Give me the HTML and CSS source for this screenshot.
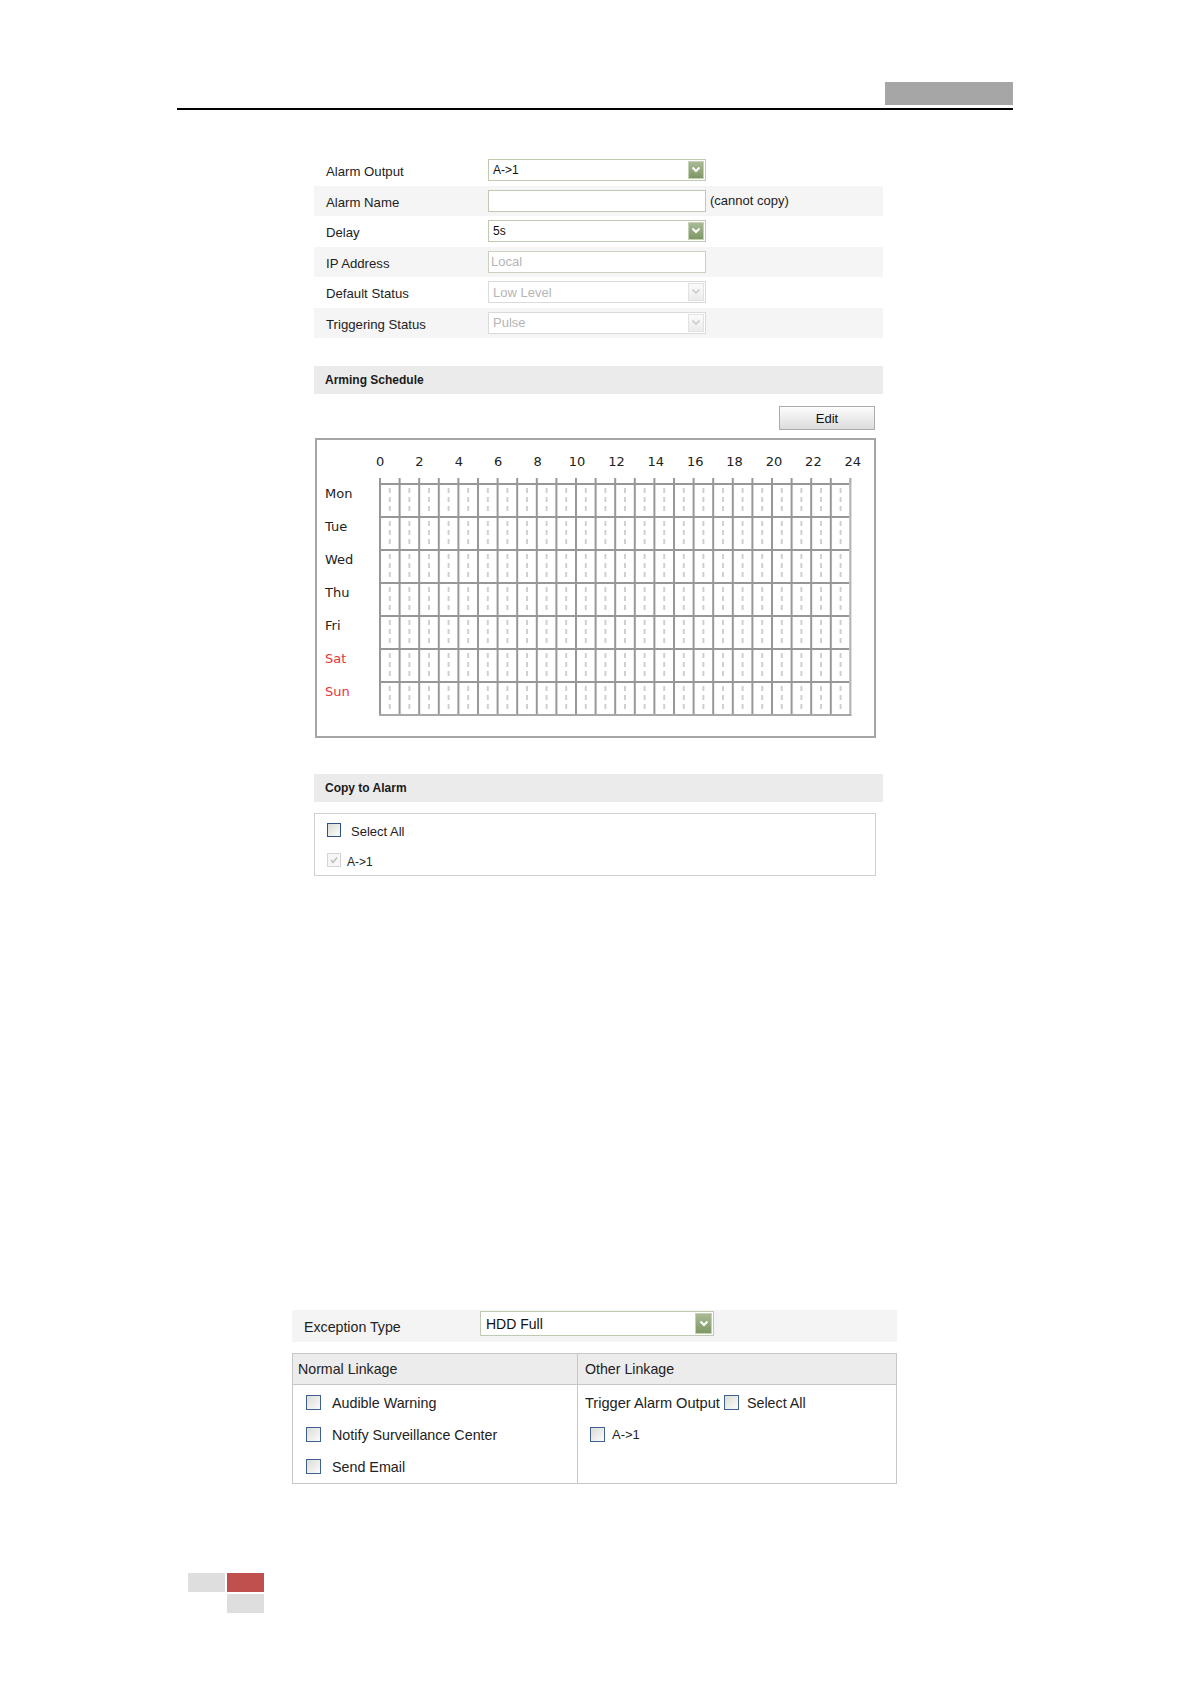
FILE: index.html
```html
<!DOCTYPE html>
<html>
<head>
<meta charset="utf-8">
<title>Alarm Output</title>
<link rel="stylesheet" href="styles.css">
</head>
<body>
<div class="page">
  <div class="top"><div class="tab"></div></div>

  <section class="cfg">
    <div class="row">
      <div class="lbl">Alarm Output</div>
      <div class="inp">A-&gt;1<span class="dd"><svg width="10" height="8" viewBox="0 0 10 8"><path d="M1.5 1.5 L5 5 L8.5 1.5" fill="none" stroke="#fff" stroke-width="2"/></svg></span></div>
    </div>
    <div class="row">
      <div class="lbl">Alarm Name</div>
      <div class="inp"></div>
      <span class="note">(cannot copy)</span>
    </div>
    <div class="row">
      <div class="lbl">Delay</div>
      <div class="inp">5s<span class="dd"><svg width="10" height="8" viewBox="0 0 10 8"><path d="M1.5 1.5 L5 5 L8.5 1.5" fill="none" stroke="#fff" stroke-width="2"/></svg></span></div>
    </div>
    <div class="row">
      <div class="lbl">IP Address</div>
      <div class="inp text-dis">Local</div>
    </div>
    <div class="row">
      <div class="lbl">Default Status</div>
      <div class="inp dis">Low Level<span class="dd"><svg width="10" height="8" viewBox="0 0 10 8"><path d="M1.5 1.5 L5 5 L8.5 1.5" fill="none" stroke="#c8c8c8" stroke-width="1.5"/></svg></span></div>
    </div>
    <div class="row">
      <div class="lbl">Triggering Status</div>
      <div class="inp dis">Pulse<span class="dd"><svg width="10" height="8" viewBox="0 0 10 8"><path d="M1.5 1.5 L5 5 L8.5 1.5" fill="none" stroke="#c8c8c8" stroke-width="1.5"/></svg></span></div>
    </div>

    <div class="sec-head arming">Arming Schedule</div>
    <div class="edit-row"><button class="edit">Edit</button></div>

    <div class="sched">
      <div class="hours">
        <span>0</span><span>2</span><span>4</span><span>6</span><span>8</span><span>10</span><span>12</span><span>14</span><span>16</span><span>18</span><span>20</span><span>22</span><span>24</span>
      </div>
      <div class="sgrid">
        <div class="days">
          <div>Mon</div><div>Tue</div><div>Wed</div><div>Thu</div><div>Fri</div><div class="we">Sat</div><div class="we">Sun</div>
        </div>
        <svg class="grid" width="474" height="239" viewBox="0 0 474 239">
          <defs>
            <pattern id="cell" patternUnits="userSpaceOnUse" x="0" y="5" width="19.6" height="33">
              <rect x="0" y="0" width="2" height="33" fill="#979797"/>
              <rect x="0" y="0" width="19.6" height="2" fill="#979797"/>
              <line x1="10.8" y1="5" x2="10.8" y2="31" stroke="#a0a0a0" stroke-width="1" stroke-dasharray="5 4"/>
            </pattern>
            <pattern id="tick" patternUnits="userSpaceOnUse" x="0" y="0" width="19.6" height="5">
              <rect x="0" y="0" width="2" height="5" fill="#979797"/>
            </pattern>
          </defs>
          <rect x="0" y="0" width="472.4" height="5" fill="url(#tick)"/>
          <rect x="0" y="5" width="470.4" height="231" fill="url(#cell)"/>
          <rect x="470.4" y="0" width="2" height="238" fill="#b4b4b4"/>
          <rect x="0" y="236" width="472.4" height="2" fill="#a8a8a8"/>
        </svg>
      </div>
    </div>

    <div class="sec-head copyhead">Copy to Alarm</div>
    <div class="copybox">
      <div class="crow"><span class="cb"></span><span class="ctext">Select All</span></div>
      <div class="crow"><span class="cb cb-dis"><svg width="10" height="10" viewBox="0 0 10 10"><path d="M2 5 L4 7.5 L8 2.5" fill="none" stroke="#b8b8b8" stroke-width="1.3"/></svg></span><span class="ctext small">A-&gt;1</span></div>
    </div>
  </section>

  <section class="exc">
    <div class="erow">
      <div class="elbl">Exception Type</div>
      <div class="inp big">HDD Full<span class="dd"><svg width="10" height="8" viewBox="0 0 10 8"><path d="M1.5 1.5 L5 5 L8.5 1.5" fill="none" stroke="#fff" stroke-width="2"/></svg></span></div>
    </div>
    <div class="ltable">
      <div class="lh left">Normal Linkage</div>
      <div class="lh right">Other Linkage</div>
      <div class="lb left">
        <div class="brow"><span class="cb lg"></span><span class="btext">Audible Warning</span></div>
        <div class="brow"><span class="cb lg"></span><span class="btext">Notify Surveillance Center</span></div>
        <div class="brow"><span class="cb lg"></span><span class="btext">Send Email</span></div>
      </div>
      <div class="lb right">
        <div class="brow"><span class="ttext">Trigger Alarm Output</span><span class="cb lg gap"></span><span class="btext sa">Select All</span></div>
        <div class="brow sub"><span class="cb lg"></span><span class="btext a1">A-&gt;1</span></div>
      </div>
    </div>
  </section>

  <div class="foot">
    <div class="fg"></div><div class="fr"></div>
    <div class="fe"></div><div class="fg"></div>
  </div>
</div>
</body>
</html>
```
FILE: styles.css
```css
html, body {
  margin: 0;
  padding: 0;
  background: #fff;
}
body {
  font-family: "Liberation Sans", Arial, sans-serif;
  color: #222;
}
.page {
  width: 1191px;
  min-height: 1684px;
  padding-top: 82px;
  box-sizing: border-box;
}
.top {
  margin-left: 177px;
  width: 836px;
  display: flex;
  justify-content: flex-end;
  padding-bottom: 3px;
  border-bottom: 2px solid #000;
}
.tab {
  width: 128px;
  height: 23px;
  background: #a6a6a6;
}

/* config form */
.cfg {
  margin: 45px 0 0 314px;
  width: 569px;
}
.row {
  height: 30.5px;
  display: flex;
  align-items: center;
}
.row:nth-child(even) {
  background: #f5f5f5;
}
.lbl {
  width: 174px;
  box-sizing: border-box;
  padding: 3px 0 0 12px;
  font-size: 13.2px;
  color: #222;
}
.inp {
  box-sizing: border-box;
  width: 218px;
  height: 22px;
  border: 1px solid #bfcbb0;
  background: #fff;
  font-size: 12px;
  padding-left: 4px;
  display: flex;
  align-items: center;
  justify-content: space-between;
  color: #111;
}
.dd {
  width: 16px;
  height: 18px;
  margin-right: 1px;
  box-sizing: border-box;
  border: 1px solid #c5d1b6;
  background: linear-gradient(#a9ba95, #7e9865);
  display: flex;
  align-items: center;
  justify-content: center;
}
.inp.dis {
  border-color: #dadada;
  color: #b5b5b5;
  font-size: 13px;
}
.inp.dis .dd {
  background: linear-gradient(#fafafa, #ececec);
  border-color: #e2e2e2;
}
.inp.text-dis {
  border-color: #c9d2bd;
  color: #b5b5b5;
  font-size: 13px;
  padding-left: 2px;
}
.note {
  font-size: 13px;
  margin-left: 4px;
  color: #222;
}

.sec-head {
  height: 28px;
  background: #ebebeb;
  font-size: 12px;
  font-weight: bold;
  padding-left: 11px;
  display: flex;
  align-items: center;
  color: #1a1a1a;
}
.arming {
  margin-top: 28px;
}
.edit-row {
  display: flex;
  justify-content: flex-end;
  padding-right: 8px;
  margin-top: 12px;
}
.edit {
  width: 96px;
  height: 24px;
  border: 1px solid #ababab;
  background: linear-gradient(#fdfdfd, #dcdcdc);
  font-family: "Liberation Sans", Arial, sans-serif;
  font-size: 13px;
  color: #111;
  padding: 0;
}

/* schedule */
.sched {
  margin: 8px 0 0 1px;
  width: 561px;
  height: 300px;
  box-sizing: border-box;
  border: 2px solid #a5a5a5;
}
.hours {
  display: flex;
  padding-left: 43.4px;
  margin-top: 14px;
  height: 16px;
}
.hours span {
  width: 39.4px;
  flex: none;
  text-align: center;
  font-family: "DejaVu Sans", Verdana, sans-serif;
  font-size: 13px;
  line-height: 16px;
  color: #222;
}
.sgrid {
  display: flex;
  margin-top: 8px;
}
.days {
  width: 62px;
  box-sizing: border-box;
  padding: 5px 0 0 8px;
}
.days div {
  height: 33px;
  line-height: 22px;
  font-family: "DejaVu Sans", Verdana, sans-serif;
  font-size: 13px;
  color: #222;
}
.days .we {
  color: #e8353a;
}
.grid {
  display: block;
  flex: none;
}

/* copy */
.copyhead {
  margin-top: 36px;
}
.copybox {
  margin-top: 11px;
  width: 562px;
  height: 63px;
  box-sizing: border-box;
  border: 1px solid #d0d0d0;
  padding: 9px 0 0 12px;
}
.crow {
  display: flex;
  align-items: center;
  height: 14px;
  margin-bottom: 16px;
}
.cb {
  width: 14px;
  height: 14px;
  box-sizing: border-box;
  border: 1px solid #2b5282;
  background: linear-gradient(135deg, #dcdcd6, #fbfbfb);
  flex: none;
  display: flex;
  align-items: center;
  justify-content: center;
}
.cb.cb-dis {
  border-color: #d4d4d4;
  background: #f6f6f6;
}
.ctext {
  font-size: 13px;
  margin-left: 10px;
  padding-top: 3px;
  color: #222;
}
.ctext.small {
  margin-left: 6px;
  font-size: 12px;
}

/* exception */
.exc {
  margin: 434px 0 0 292px;
  width: 605px;
}
.erow {
  height: 32px;
  background: #f4f4f4;
  display: flex;
  align-items: flex-start;
}
.elbl {
  width: 188px;
  box-sizing: border-box;
  padding: 9px 0 0 12px;
  font-size: 14.2px;
  color: #222;
}
.inp.big {
  width: 234px;
  height: 25px;
  margin-top: 1px;
  font-size: 14px;
  padding-left: 5px;
}
.inp.big .dd {
  width: 17px;
  height: 21px;
}
.ltable {
  margin-top: 11px;
  border: 1px solid #c6c6c6;
  display: grid;
  grid-template-columns: 285px 1fr;
  grid-template-rows: 31px auto;
}
.lh {
  background: #ececec;
  border-bottom: 1px solid #c6c6c6;
  font-size: 14.2px;
  display: flex;
  align-items: center;
  color: #222;
}
.lh.left {
  padding-left: 5px;
  border-right: 1px solid #c6c6c6;
}
.lh.right {
  padding-left: 7px;
}
.lb {
  padding: 10px 0 9px 0;
}
.lb.left {
  padding-left: 13px;
  border-right: 1px solid #c6c6c6;
}
.lb.right {
  padding-left: 7px;
}
.brow {
  display: flex;
  align-items: center;
  height: 15px;
  margin-bottom: 17px;
}
.brow:last-child {
  margin-bottom: 0;
}
.cb.lg {
  width: 15px;
  height: 15px;
  border-color: #3f6190;
}
.btext {
  font-size: 14.3px;
  margin-left: 11px;
  color: #222;
}
.ttext {
  font-size: 14.6px;
  color: #222;
}
.cb.gap {
  margin-left: 4px;
}
.btext.sa {
  margin-left: 8px;
}
.brow.sub {
  padding-left: 5px;
}
.btext.a1 {
  margin-left: 7px;
  font-size: 13px;
}

/* footer */
.foot {
  margin: 89px 0 0 188px;
  display: grid;
  grid-template-columns: 37px 37px;
  grid-template-rows: 19px 19px;
  gap: 2px;
}
.fg {
  background: #dedede;
}
.fr {
  background: #c0504d;
}
```
